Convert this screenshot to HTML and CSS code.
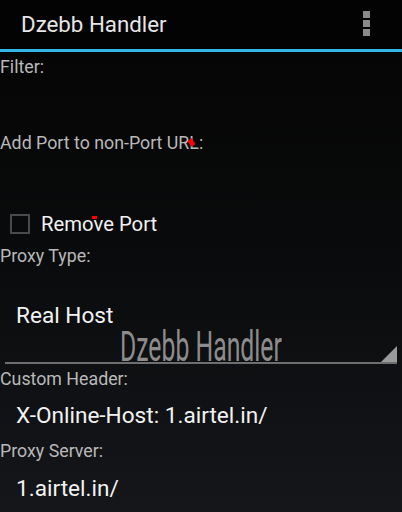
FILE: index.html
```html
<!DOCTYPE html>
<html>
<head>
<meta charset="utf-8">
<link rel="stylesheet" href="styles.css">
</head>
<body>
<div class="screen">
  <header class="actionbar">
    <span class="title">Dzebb Handler</span>
    <span class="overflow" aria-label="More options"><i></i><i></i><i></i></span>
  </header>
  <main class="content">
    <div class="label l-filter">Filter:</div>
    <div class="field"></div>
    <div class="label l-port">Add Port to non-Port URL:</div>
    <div class="field"></div>
    <label class="check-row">
      <span class="checkbox"></span>
      <span class="check-text">Remove Port</span>
    </label>
    <div class="label l-type">Proxy Type:</div>
    <div class="spinner">
      <span class="spinner-value">Real Host</span>
      <span class="spinner-arrow"></span>
    </div>
    <div class="label l-header">Custom Header:</div>
    <div class="value v-header">X-Online-Host: 1.airtel.in/</div>
    <div class="label l-server">Proxy Server:</div>
    <div class="value v-server">1.airtel.in/</div>
    <div class="watermark">Dzebb Handler</div>
    <span class="speck speck-1"></span>
    <span class="speck speck-2"></span>
  </main>
</div>
</body>
</html>
```

FILE: styles.css
```css
* { box-sizing: border-box; }
html, body { margin: 0; padding: 0; }
body {
  width: 402px;
  height: 512px;
  overflow: hidden;
  background: #000;
  font-family: Roboto, "Noto Sans", sans-serif;
}
.screen {
  width: 402px;
  height: 512px;
  display: flex;
  flex-direction: column;
}
.actionbar {
  height: 52px;
  flex: none;
  background: #030303;
  border-bottom: 3px solid #33b5e5;
  display: flex;
  align-items: center;
  justify-content: space-between;
  padding: 0 32px 2px 21px;
}
.title {
  color: #e6e6e6;
  font-size: 22.3px;
}
.overflow {
  display: flex;
  flex-direction: column;
  gap: 2px;
}
.overflow i {
  display: block;
  width: 7px;
  height: 7px;
  background: #8a8a8a;
}
.content {
  position: relative;
  flex: 1;
  display: flex;
  flex-direction: column;
  background: linear-gradient(to bottom, #050505 0%, #0a0b0c 45%, #14161a 100%);
}
.label {
  color: #b9b9b9;
  font-size: 17.8px;
  height: 30px;
  line-height: 30px;
  white-space: nowrap;
}
.l-filter { height: 28px; }
.field { height: 48px; }
.check-row {
  height: 35px;
  display: flex;
  align-items: center;
  gap: 11px;
  padding-left: 10px;
}
.checkbox {
  width: 20px;
  height: 20px;
  border: 2px solid #4a4a4a;
}
.check-text {
  color: #f2f2f2;
  font-size: 20.3px;
}
.spinner {
  position: relative;
  height: 93px;
  margin: 0 5px;
  border-bottom: 2px solid #6e6e6e;
  padding: 31px 0 0 11px;
}
.spinner-value {
  color: #f2f2f2;
  font-size: 22.6px;
}
.spinner-arrow {
  position: absolute;
  right: 0;
  bottom: 0;
  width: 0;
  height: 0;
  border-left: 16px solid transparent;
  border-bottom: 16px solid #9a9a9a;
}
.value {
  color: #f2f2f2;
  font-size: 22.6px;
  height: 46px;
  line-height: 46px;
  padding-left: 16px;
  white-space: nowrap;
}
.v-header { height: 42px; line-height: 44px; }
.watermark {
  position: absolute;
  left: 120px;
  top: 270px;
  color: #8c8c8c;
  font-size: 42px;
  line-height: 50px;
  white-space: nowrap;
  transform: scaleX(0.59);
  transform-origin: left top;
}
.speck {
  position: absolute;
  width: 5px;
  height: 7px;
  background: #f00;
  transform: rotate(-35deg);
}
.speck-1 { left: 189px; top: 87px; }
.speck-2 { left: 92px; top: 164px; width: 5px; height: 3px; transform: none; }
```
